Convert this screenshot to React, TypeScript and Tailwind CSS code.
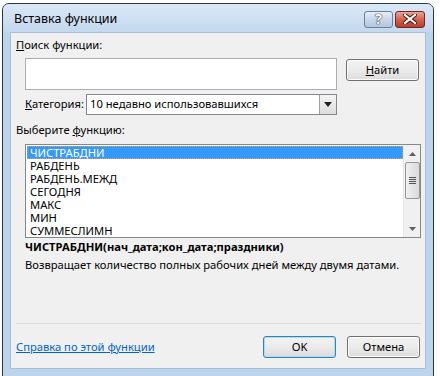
import React from "react";

const FUNCS = ["ЧИСТРАБДНИ", "РАБДЕНЬ", "РАБДЕНЬ.МЕЖД", "СЕГОДНЯ", "МАКС", "МИН", "СУММЕСЛИМН"];

function HelpGlyph() {
    return (
        <span className="text-[14px] font-bold leading-none text-white [text-shadow:0_0_1px_#2b3f5c,0_0_1px_#2b3f5c,0_0_1px_#2b3f5c]">?</span>
    );
}

function CloseGlyph() {
    return (
        <svg width="14" height="10" viewBox="0 0 14 10">
            <path d="M2 1 L12 9 M12 1 L2 9" stroke="#3a1010" strokeWidth="4" strokeLinecap="square" />
            <path d="M2 1 L12 9 M12 1 L2 9" stroke="#ffffff" strokeWidth="2.2" strokeLinecap="square" />
        </svg>
    );
}

function Button({ children, focused = false }: { children: React.ReactNode; focused?: boolean }) {
    return (
        <div
            className={`flex items-center justify-center w-[73px] h-[22px] rounded-[3px] border bg-gradient-to-b from-[#f2f2f2] via-[#ebebeb] to-[#dcdcdc] ${focused ? "border-[#3c7fb1] shadow-[inset_0_0_0_1px_#a6e0f7]" : "border-[#707070] shadow-[inset_0_0_0_1px_#fcfcfc]"}`}
        >
            {children}
        </div>
    );
}

export default function App() {
    return (
        <div className="w-[440px] h-[376px] bg-white overflow-hidden text-[11.2px] text-black" style={{ fontFamily: '"Noto Sans", "Liberation Sans", sans-serif' }}>
            <div className="ml-[2px] mt-[3px] w-[432px] h-[380px] rounded-t-[7px] border border-[#2c3640] bg-[#bcd4ec] flex flex-col">
                {/* title bar */}
                <div className="h-[28px] flex items-center justify-between pl-[11px] pr-[8px] rounded-t-[6px] bg-gradient-to-b from-[#dbe8f6] to-[#c3d8ee]">
                    <span className="text-[12.5px] text-black mt-[2px]">Вставка функции</span>
                    <div className="flex gap-[2px] mt-[2px]">
                        <div className="w-[29px] h-[17px] flex items-center justify-center rounded-[3px] border border-[#6d7f96] bg-gradient-to-b from-[#e6eef8] via-[#c9d7ea] to-[#b3c6df]">
                            <HelpGlyph />
                        </div>
                        <div className="w-[30px] h-[17px] flex items-center justify-center rounded-[3px] border border-[#6b2a22] bg-gradient-to-b from-[#e8a597] via-[#d0624e] to-[#b93d27]">
                            <CloseGlyph />
                        </div>
                    </div>
                </div>

                {/* client area */}
                <div className="mx-[7px] h-[337px] bg-[#f0f0f0] border border-[#a9bfd6] pl-[5px] pr-[4px] pt-[5px]">
                    <div className="leading-[14px]"><u>П</u>оиск функции:</div>

                    <div className="flex items-start mt-[6px] ml-[9px]">
                        <div className="w-[312px] h-[32px] bg-white border border-[#abadb3]" />
                        <div className="ml-[9px] mt-[1px]">
                            <Button><span><u>Н</u>айти</span></Button>
                        </div>
                    </div>

                    <div className="flex items-center mt-[4px] ml-[9px]">
                        <span className="w-[61px]"><u>К</u>атегория:</span>
                        <div className="w-[251px] h-[21px] bg-white border border-[#828790] flex items-center">
                            <span className="flex-1 pl-[3px]">10 недавно использовавшихся</span>
                            <div className="w-[17px] h-[19px] border-l border-[#a0a0a0] bg-gradient-to-b from-[#f4f4f4] to-[#dedede] flex items-center justify-center">
                                <svg width="8" height="5" viewBox="0 0 8 5"><path d="M0 0 H8 L4 5 Z" fill="#222" /></svg>
                            </div>
                        </div>
                    </div>

                    <div className="mt-[8px] leading-[14px]">Выберите <u>ф</u>ункцию:</div>

                    <div className="mt-[7px] ml-[9px] w-[396px] h-[94px] bg-white border border-[#828790] flex">
                        <div className="flex-1 pt-[1px] pl-[1px]">
                            {FUNCS.map((f, i) => (
                                <div
                                    key={f}
                                    className={`h-[13px] leading-[13px] pl-[3px] ${i === 0 ? "bg-[#3399ff] text-white outline-1 outline-dotted outline-[#e0a040] -outline-offset-1" : ""}`}
                                >
                                    {f}
                                </div>
                            ))}
                        </div>
                        <div className="w-[17px] bg-[#f0f0f0] border-l border-[#e6e6e6] flex flex-col items-center">
                            <div className="h-[17px] flex items-center justify-center">
                                <svg width="7" height="4" viewBox="0 0 7 4"><path d="M0 4 L3.5 0 L7 4 Z" fill="#606060" /></svg>
                            </div>
                            <div className="w-[15px] h-[37px] rounded-[2px] border border-[#979797] bg-gradient-to-r from-[#f0f0f0] to-[#dadada] flex flex-col items-center justify-center gap-[1px]">
                                <div className="w-[7px] h-[1px] bg-[#555]" />
                                <div className="w-[7px] h-[1px] bg-[#555]" />
                                <div className="w-[7px] h-[1px] bg-[#555]" />
                                <div className="w-[7px] h-[1px] bg-[#555]" />
                            </div>
                            <div className="flex-1" />
                            <div className="h-[17px] flex items-center justify-center">
                                <svg width="7" height="4" viewBox="0 0 7 4"><path d="M0 0 H7 L3.5 4 Z" fill="#606060" /></svg>
                            </div>
                        </div>
                    </div>

                    <div className="ml-[9px] mt-[2px] font-bold leading-[14px]">ЧИСТРАБДНИ(нач_дата;кон_дата;праздники)</div>
                    <div className="ml-[9px] mt-[4px] leading-[14px]">Возвращает количество полных рабочих дней между двумя датами.</div>

                    <div className="mt-[51px] w-[405px] h-[1px] bg-[#dcdcdc]" />

                    <div className="flex items-center mt-[12px]">
                        <span className="flex-1 text-[#0066cc] underline">Справка по этой функции</span>
                        <Button focused>OK</Button>
                        <div className="ml-[11px] mr-[1px]">
                            <Button>Отмена</Button>
                        </div>
                    </div>
                </div>
            </div>
        </div>
    );
}
